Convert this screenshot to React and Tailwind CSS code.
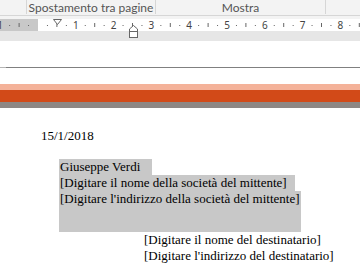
import React from 'react';

const CM = 37.8;
const ZERO = 38;

const Ruler = () => {
    const marks = [];
    for (let i = -1; i <= 8; i++) {
        const x = ZERO + i * CM;
        if (i !== 0) {
            marks.push(
                <text key={'n' + i} x={x} y={9.5} textAnchor="middle" fontSize="10" fill="#444" fontFamily="'Noto Sans', sans-serif">
                    {Math.abs(i)}
                </text>
            );
        }
        marks.push(<rect key={'a' + i} x={x + CM / 4 - 0.5} y={6} width={1} height={1} fill="#666" />);
        marks.push(<rect key={'b' + i} x={x + CM / 2 - 0.5} y={4} width={1} height={4} fill="#666" />);
        marks.push(<rect key={'c' + i} x={x + (3 * CM) / 4 - 0.5} y={6} width={1} height={1} fill="#666" />);
    }
    return (
        <svg width="360" height="12" className="block">
            <rect x="0" y="0" width={ZERO} height="12" fill="#c8c8c8" />
            <rect x={ZERO} y="0" width={360 - ZERO} height="12" fill="#ffffff" />
            {marks}
        </svg>
    );
};

const App = () => {
    const serif = { fontFamily: "'Liberation Serif', 'Times New Roman', serif" };
    return (
        <div className="w-[360px] h-[280px] overflow-hidden bg-white relative">
            {/* ribbon group labels */}
            <div className="h-[16px] bg-[#f3f3f3] border-b border-[#d6d6d6] flex text-[12px] leading-[15px] text-[#555] whitespace-nowrap" style={{ fontFamily: "Lato, 'Noto Sans', sans-serif" }}>
                <div className="w-[27px] border-r border-[#d6d6d6] h-[14px]"></div>
                <div className="w-[129px] border-r border-[#d6d6d6] h-[14px] flex justify-center">Spostamento tra pagine</div>
                <div className="w-[170px] border-r border-[#d6d6d6] h-[14px] flex justify-center">Mostra</div>
            </div>
            <div className="h-[3px] bg-[#f3f3f3]"></div>
            <div className="relative">
                <Ruler />
                <div className="h-[10px] bg-[#e6e6e6]"></div>
                <svg className="absolute left-[53px] top-[0px]" width="9" height="7">
                    <path d="M0.5 0.5 H8.5 L4.5 5.5 Z" fill="#fff" stroke="#666" strokeWidth="1" />
                </svg>
                <svg className="absolute left-[129px] top-[6px]" width="9" height="13">
                    <path d="M0.5 6.5 V4 L4.5 0.5 L8.5 4 V6.5 Z" fill="#fff" stroke="#666" strokeWidth="1" />
                    <rect x="0.5" y="6.5" width="8" height="6" fill="#fff" stroke="#666" strokeWidth="1" />
                </svg>
            </div>

            {/* page */}
            <div className="pt-[26px]">
                <div className="flex h-[1px]">
                    <div className="w-[6px] bg-[#b5b5b5]"></div>
                    <div className="flex-1 bg-[#808080]"></div>
                </div>
                <div className="h-[16px]"></div>
                <div className="h-[6px] bg-[#f4b299]"></div>
                <div className="h-[12px] bg-[#d24a18]"></div>
                <div className="h-[6px] bg-[#8e8784]"></div>

                <div className="text-[13px] leading-[16px] text-black" style={serif}>
                    <div className="pl-[41px] pt-[20px]">15/1/2018</div>
                    <div className="pl-[59px] pt-[15px]">
                        <div className="w-[93px] bg-[#c8c8c8] pl-[1px]">Giuseppe Verdi</div>
                        <div className="w-[236px] bg-[#c8c8c8] pl-[1px]">[Digitare il nome della società del mittente]</div>
                        <div className="w-[242px] bg-[#c8c8c8] pl-[1px]">[Digitare l'indirizzo della società del mittente]</div>
                        <div className="w-[242px] h-[25px] bg-[#c8c8c8]"></div>
                    </div>
                    <div className="pl-[144px]">
                        <div>[Digitare il nome del destinatario]</div>
                        <div>[Digitare l'indirizzo del destinatario]</div>
                    </div>
                </div>
            </div>
        </div>
    );
};

export default App;
